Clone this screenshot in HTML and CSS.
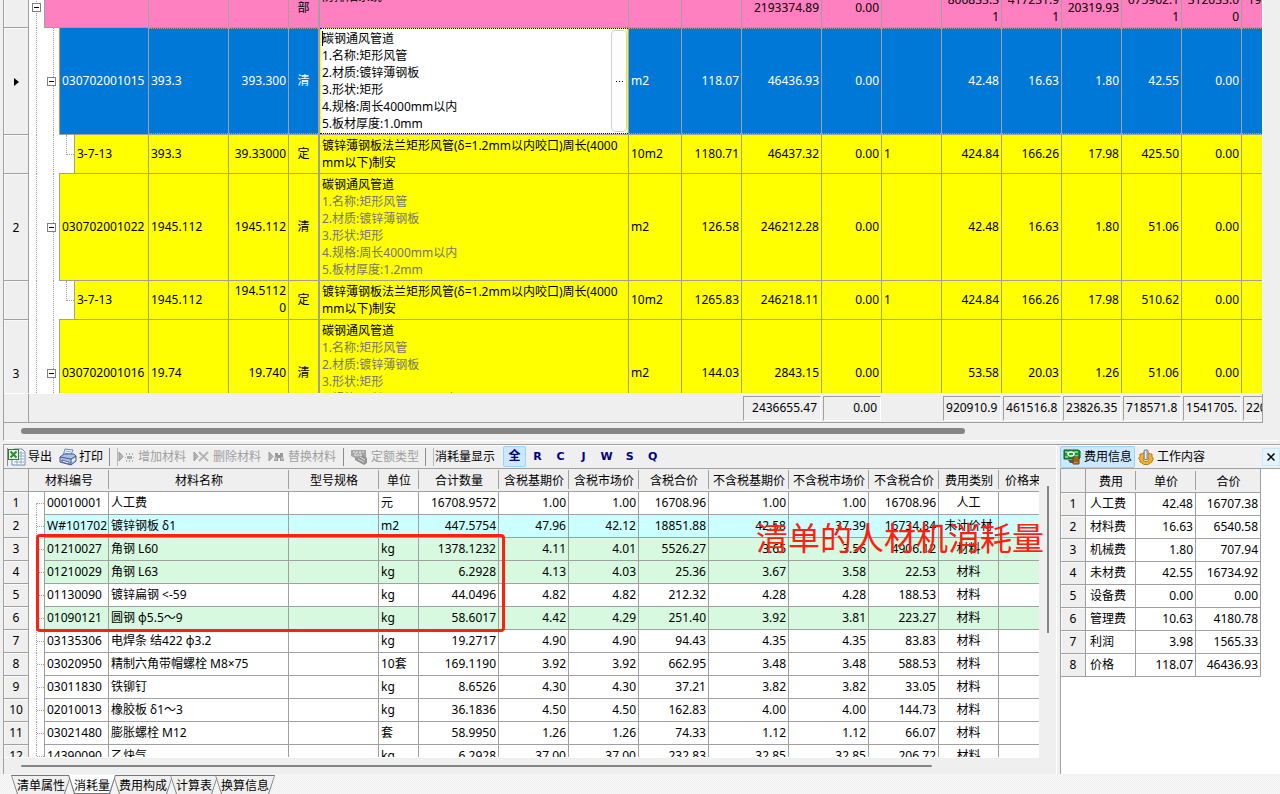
FILE: index.html
```
<!DOCTYPE html>
<html lang="zh-CN">
<head>
<meta charset="utf-8">
<title>清单计价</title>
<link rel="stylesheet" href="styles.css">
</head>
<body>
<main class="app">
<section class="bill">
<div class="bill-body">
<table class="grid bill-grid">
<colgroup><col class="w25"><col class="w120"><col class="w80"><col class="w60"><col class="w31"><col class="w309"><col class="w53"><col class="w60"><col class="w80"><col class="w60"><col class="w60"><col class="w60"><col class="w60"><col class="w60"><col class="w60"><col class="w60"><col class="w60"></colgroup>
<tbody>
<tr class="row-part">
<th class="gut"></th><td class="tree lv1"><button class="tog" aria-label="折叠"></button></td><td></td><td></td><td class="c kind">部</td><td class="desc">防排烟系统</td><td></td><td></td><td class="r">2193374.89</td><td class="r">0.00</td><td></td><td class="r">800833.3<br>1</td><td class="r">417231.9<br>1</td><td class="r">20319.93</td><td class="r">675962.1<br>1</td><td class="r">312033.0<br>0</td><td class="r">198405.7<br>1</td>
</tr>
<tr class="row-item selected">
<th class="gut"><span class="pointer"></span></th><td class="tree lv2"><button class="tog" aria-label="折叠"></button><span class="val">030702001015</span></td><td>393.3</td><td class="r">393.300</td><td class="c kind">清</td>
<td class="editing"><div class="editor"><textarea aria-label="项目名称及特征" spellcheck="false">碳钢通风管道
1.名称:矩形风管
2.材质:镀锌薄钢板
3.形状:矩形
4.规格:周长4000mm以内
5.板材厚度:1.0mm</textarea><button class="more" aria-label="更多"><i></i><i></i><i></i></button><span class="caret"></span></div></td>
<td>m2</td><td class="r">118.07</td><td class="r">46436.93</td><td class="r">0.00</td><td></td><td class="r">42.48</td><td class="r">16.63</td><td class="r">1.80</td><td class="r">42.55</td><td class="r">0.00</td><td></td>
</tr>
<tr class="row-sub">
<th class="gut"></th><td class="tree lv3"><span class="val">3-7-13</span></td><td>393.3</td><td class="r">39.33000</td><td class="c kind">定</td><td class="desc">镀锌薄钢板法兰矩形风管(δ=1.2mm以内咬口)周长(4000<br>mm以下)制安</td><td>10m2</td><td class="r">1180.71</td><td class="r">46437.32</td><td class="r">0.00</td><td>1</td><td class="r">424.84</td><td class="r">166.26</td><td class="r">17.98</td><td class="r">425.50</td><td class="r">0.00</td><td></td>
</tr>
<tr class="row-item">
<th class="gut">2</th><td class="tree lv2"><button class="tog" aria-label="折叠"></button><span class="val">030702001022</span></td><td>1945.112</td><td class="r">1945.112</td><td class="c kind">清</td><td class="desc">碳钢通风管道<br><span class="dim">1.名称:矩形风管<br>2.材质:镀锌薄钢板<br>3.形状:矩形<br>4.规格:周长4000mm以内<br>5.板材厚度:1.2mm</span></td><td>m2</td><td class="r">126.58</td><td class="r">246212.28</td><td class="r">0.00</td><td></td><td class="r">42.48</td><td class="r">16.63</td><td class="r">1.80</td><td class="r">51.06</td><td class="r">0.00</td><td></td>
</tr>
<tr class="row-sub">
<th class="gut"></th><td class="tree lv3"><span class="val">3-7-13</span></td><td>1945.112</td><td class="r">194.5112<br>0</td><td class="c kind">定</td><td class="desc">镀锌薄钢板法兰矩形风管(δ=1.2mm以内咬口)周长(4000<br>mm以下)制安</td><td>10m2</td><td class="r">1265.83</td><td class="r">246218.11</td><td class="r">0.00</td><td>1</td><td class="r">424.84</td><td class="r">166.26</td><td class="r">17.98</td><td class="r">510.62</td><td class="r">0.00</td><td></td>
</tr>
<tr class="row-item">
<th class="gut">3</th><td class="tree lv2"><button class="tog" aria-label="折叠"></button><span class="val">030702001016</span></td><td>19.74</td><td class="r">19.740</td><td class="c kind">清</td><td class="desc">碳钢通风管道<br><span class="dim">1.名称:矩形风管<br>2.材质:镀锌薄钢板<br>3.形状:矩形<br>4.规格:周长2000mm以内<br>5.板材厚度:0.75mm</span></td><td>m2</td><td class="r">144.03</td><td class="r">2843.15</td><td class="r">0.00</td><td></td><td class="r">53.58</td><td class="r">20.03</td><td class="r">1.26</td><td class="r">51.06</td><td class="r">0.00</td><td></td>
</tr>
</tbody>
</table>
</div>
<div class="bill-foot">
<table class="sums">
<colgroup><col class="w25"><col class="w120"><col class="w80"><col class="w60"><col class="w31"><col class="w309"><col class="w53"><col class="w60"><col class="w80"><col class="w60"><col class="w60"><col class="w60"><col class="w60"><col class="w60"><col class="w60"><col class="w60"><col class="w60"></colgroup>
<tbody><tr><td class="edge"></td><td colspan="7"></td><td><div class="sum">2436655.47</div></td><td><div class="sum">0.00</div></td><td></td><td><div class="sum cut">920910.9</div></td><td><div class="sum cut">461516.8</div></td><td><div class="sum cut">23826.35</div></td><td><div class="sum cut">718571.8</div></td><td><div class="sum cut">1541705.</div></td><td><div class="sum cut">220114.5</div></td></tr></tbody>
</table>
</div>
<div class="hscroll"><div class="thumb"></div></div>
</section>

<div class="lower">
<section class="materials">
<div class="toolbar">
<span class="grip"></span>
<button class="tb export"><svg width="18" height="18" viewBox="0 0 18 18"><path d="M6 1h8l3 3v13H4v-5" fill="#fff" stroke="#6f8db3"/><path d="M11 5h5M11 8h5M7 11h9M6 14h10M13 3v13M9 11v6" stroke="#8fa9c6"/><rect x="0.500" y="1.500" width="10" height="10" fill="#e6f3e4" stroke="#2c7a35"/><path d="M2.500 3.500l6 6M8.500 3.500l-6 6" stroke="#2c8a38" stroke-width="2"/></svg>导出</button>
<button class="tb print"><svg width="18" height="18" viewBox="0 0 18 18"><path d="M6 1l8 1-3 7-7-1z" fill="#f8fbff" stroke="#6b83b5"/><path d="M7 3l5 1M6 5l5 1" stroke="#7f9fd0"/><path d="M1 9l4-3 10 0 2 2v5l-5 4-11-3z" fill="#aebfe3" stroke="#3f5b96"/><path d="M1 9l11 2 5-3M12 11v6" fill="none" stroke="#3f5b96"/><path d="M3 12l7 2v2l-7-2z" fill="#fff" stroke="#4b68a5"/><path d="M13 13l3-2" stroke="#f3f7ff" stroke-width="2"/></svg>打印</button>
<span class="sep"></span><span class="grip"></span>
<button class="tb off" disabled><svg width="16" height="14" viewBox="0 0 16 14"><path d="M1 2v9l4-4.500z" fill="#b5b5b5" stroke="#999"/><path d="M8 3h1v2h-1zM11 3h1v2h-1zM14 3h1v2h-1zM9 6h5v3h-5zM7 7h1v1h-1zM15 7h1v1h-1zM8 10h1v2h-1zM11 10h1v2h-1zM14 10h1v2h-1z" fill="#aaa"/></svg>增加材料</button>
<button class="tb off" disabled><svg width="16" height="14" viewBox="0 0 16 14"><path d="M1 2v9l4-4.500z" fill="#b5b5b5" stroke="#999"/><path d="M6 2l9 9M15 2l-9 9" stroke="#b5b5b5" stroke-width="2"/></svg>删除材料</button>
<button class="tb off" disabled><svg width="16" height="14" viewBox="0 0 16 14"><path d="M1 2v9l4-4.500z" fill="#b5b5b5" stroke="#999"/><path d="M7 3h3v2h2v-2h3v3l1 5h-4v-3h-2v3h-4l1-5z" fill="#999"/><path d="M8 7v3M14 7v3" stroke="#ddd"/></svg>替换材料</button>
<span class="sep"></span>
<button class="tb off quota" disabled><svg width="18" height="16" viewBox="0 0 18 16"><path d="M0 1h15v8h-11l-4-2z" fill="#a5a5a5"/><path d="M2 3h11M3 6h9M5 3v4M9 3v4" stroke="#e8e8e8" stroke-dasharray="2 1"/><path d="M4 9h4l4-3 4 3v5l-3 2-9-5z" fill="#949494"/><path d="M7 10l6 3M9 8l5 3" stroke="#ddd"/></svg>定额类型</button>
<span class="sep"></span><span class="grip"></span>
<span class="label">消耗量显示</span>
<button class="flt on">全</button><button class="flt">R</button><button class="flt">C</button><button class="flt">J</button><button class="flt">W</button><button class="flt">S</button><button class="flt">Q</button>
</div>
<div class="mat-area">
<div class="mat-view">
<table class="grid mat-grid">
<colgroup><col class="w25"><col class="w80"><col class="w180"><col class="w90"><col class="w40"><col class="w80"><col class="w70"><col class="w70"><col class="w70"><col class="w80"><col class="w80"><col class="w70"><col class="w60"><col class="w60"></colgroup>
<thead><tr><th></th><th>材料编号</th><th>材料名称</th><th>型号规格</th><th>单位</th><th>合计数量</th><th>含税基期价</th><th>含税市场价</th><th>含税合价</th><th>不含税基期价</th><th>不含税市场价</th><th>不含税合价</th><th>费用类别</th><th>价格来源</th></tr></thead>
<tbody>
<tr><th class="gut">1</th><td class="tree">00010001</td><td>人工费</td><td></td><td>元</td><td class="r">16708.9572</td><td class="r">1.00</td><td class="r">1.00</td><td class="r">16708.96</td><td class="r">1.00</td><td class="r">1.00</td><td class="r">16708.96</td><td class="c">人工</td><td></td></tr>
<tr class="cyan"><th class="gut">2</th><td class="tree">W#101702</td><td>镀锌钢板 δ1</td><td></td><td>m2</td><td class="r">447.5754</td><td class="r">47.96</td><td class="r">42.12</td><td class="r">18851.88</td><td class="r">42.58</td><td class="r">37.39</td><td class="r">16734.84</td><td class="c">未计价材</td><td></td></tr>
<tr class="green"><th class="gut">3</th><td class="tree">01210027</td><td>角钢 L60</td><td></td><td>kg</td><td class="r">1378.1232</td><td class="r">4.11</td><td class="r">4.01</td><td class="r">5526.27</td><td class="r">3.65</td><td class="r">3.56</td><td class="r">4906.12</td><td class="c">材料</td><td></td></tr>
<tr class="green"><th class="gut">4</th><td class="tree">01210029</td><td>角钢 L63</td><td></td><td>kg</td><td class="r">6.2928</td><td class="r">4.13</td><td class="r">4.03</td><td class="r">25.36</td><td class="r">3.67</td><td class="r">3.58</td><td class="r">22.53</td><td class="c">材料</td><td></td></tr>
<tr><th class="gut">5</th><td class="tree">01130090</td><td>镀锌扁钢 &lt;-59</td><td></td><td>kg</td><td class="r">44.0496</td><td class="r">4.82</td><td class="r">4.82</td><td class="r">212.32</td><td class="r">4.28</td><td class="r">4.28</td><td class="r">188.53</td><td class="c">材料</td><td></td></tr>
<tr class="green"><th class="gut">6</th><td class="tree">01090121</td><td>圆钢 φ5.5～9</td><td></td><td>kg</td><td class="r">58.6017</td><td class="r">4.42</td><td class="r">4.29</td><td class="r">251.40</td><td class="r">3.92</td><td class="r">3.81</td><td class="r">223.27</td><td class="c">材料</td><td></td></tr>
<tr><th class="gut">7</th><td class="tree">03135306</td><td>电焊条 结422 φ3.2</td><td></td><td>kg</td><td class="r">19.2717</td><td class="r">4.90</td><td class="r">4.90</td><td class="r">94.43</td><td class="r">4.35</td><td class="r">4.35</td><td class="r">83.83</td><td class="c">材料</td><td></td></tr>
<tr><th class="gut">8</th><td class="tree">03020950</td><td>精制六角带帽螺栓 M8×75</td><td></td><td>10套</td><td class="r">169.1190</td><td class="r">3.92</td><td class="r">3.92</td><td class="r">662.95</td><td class="r">3.48</td><td class="r">3.48</td><td class="r">588.53</td><td class="c">材料</td><td></td></tr>
<tr><th class="gut">9</th><td class="tree">03011830</td><td>铁铆钉</td><td></td><td>kg</td><td class="r">8.6526</td><td class="r">4.30</td><td class="r">4.30</td><td class="r">37.21</td><td class="r">3.82</td><td class="r">3.82</td><td class="r">33.05</td><td class="c">材料</td><td></td></tr>
<tr><th class="gut">10</th><td class="tree">02010013</td><td>橡胶板 δ1～3</td><td></td><td>kg</td><td class="r">36.1836</td><td class="r">4.50</td><td class="r">4.50</td><td class="r">162.83</td><td class="r">4.00</td><td class="r">4.00</td><td class="r">144.73</td><td class="c">材料</td><td></td></tr>
<tr><th class="gut">11</th><td class="tree">03021480</td><td>膨胀螺栓 M12</td><td></td><td>套</td><td class="r">58.9950</td><td class="r">1.26</td><td class="r">1.26</td><td class="r">74.33</td><td class="r">1.12</td><td class="r">1.12</td><td class="r">66.07</td><td class="c">材料</td><td></td></tr>
<tr><th class="gut">12</th><td class="tree">14390090</td><td>乙炔气</td><td></td><td>kg</td><td class="r">6.2928</td><td class="r">37.00</td><td class="r">37.00</td><td class="r">232.83</td><td class="r">32.85</td><td class="r">32.85</td><td class="r">206.72</td><td class="c">材料</td><td></td></tr>
</tbody>
</table>
</div>
<div class="vscroll"><div class="thumb"></div></div>
</div>
<div class="hscroll thin"><div class="thumb"></div></div>
<div class="mark"></div>
<div class="note">清单的人材机消耗量</div>
</section>

<section class="cost">
<div class="cost-tabs">
<button class="ct on"><svg width="18" height="16" viewBox="0 0 18 16"><path d="M1 1h14l2 1v7l-1 1H1z" fill="#159a32" stroke="#0b5c1e"/><path d="M2 3h3M11 3h4M2 8h3M12 7h3" stroke="#d8ffd8"/><ellipse cx="8" cy="5" rx="3" ry="2" fill="#159a32" stroke="#fff" stroke-width="1.500"/><path d="M5 11h5v3h-3z" fill="#555"/><path d="M10 8h6v7h-6z" fill="#c98b2d" stroke="#6e3e11"/><path d="M10 10h6M10 12h6" stroke="#6e3e11"/></svg>费用信息</button>
<button class="ct"><svg width="16" height="16" viewBox="0 0 16 16"><path d="M2 5l2 0 1-1h6l1 1h2l0 3 1.500 2-1.500 2v1l-2 1-2 1.500h-4l-2-1.500-2-1v-2l-1.500-1.500 1.500-2z" fill="#f0b428" stroke="#b97d10"/><ellipse cx="8" cy="10.500" rx="3" ry="2" fill="#fff2b0" stroke="#b97d10"/><path d="M6 1.500q2-1.500 4 0v8.500q-2 1.500-4 0z" fill="#b9bdc6" stroke="#7c808c"/><path d="M7.500 2v8" stroke="#f0f2f6"/></svg>工作内容</button>
<button class="close" aria-label="关闭"><svg width="8" height="8" viewBox="0 0 8 8"><path d="M0.500 0.500l7 7M7.500 0.500l-7 7" stroke="#000" stroke-width="1.500"/></svg></button>
</div>
<div class="cost-view">
<table class="grid cost-grid">
<colgroup><col class="w25"><col class="w50"><col class="w60"><col class="w65"></colgroup>
<thead><tr><th></th><th>费用</th><th>单价</th><th>合价</th></tr></thead>
<tbody>
<tr><th class="gut">1</th><td>人工费</td><td class="r">42.48</td><td class="r">16707.38</td></tr>
<tr><th class="gut">2</th><td>材料费</td><td class="r">16.63</td><td class="r">6540.58</td></tr>
<tr><th class="gut">3</th><td>机械费</td><td class="r">1.80</td><td class="r">707.94</td></tr>
<tr><th class="gut">4</th><td>未材费</td><td class="r">42.55</td><td class="r">16734.92</td></tr>
<tr><th class="gut">5</th><td>设备费</td><td class="r">0.00</td><td class="r">0.00</td></tr>
<tr><th class="gut">6</th><td>管理费</td><td class="r">10.63</td><td class="r">4180.78</td></tr>
<tr><th class="gut">7</th><td>利润</td><td class="r">3.98</td><td class="r">1565.33</td></tr>
<tr><th class="gut">8</th><td>价格</td><td class="r">118.07</td><td class="r">46436.93</td></tr>
</tbody>
</table>
</div>
</section>
</div>

<nav class="tabs">
<button class="tab">清单属性</button><button class="tab on">消耗量</button><button class="tab">费用构成</button><button class="tab">计算表</button><button class="tab">换算信息</button>
</nav>
</main>
</body>
</html>
```

FILE: styles.css
```
* { box-sizing: border-box; }
:root { --line: #a0a0a0; --face: #f0f0f0; }
body {
  margin: 0;
  background: var(--face);
  color: #000;
  font: 12px/17px "Noto Sans", "Noto Sans CJK SC", sans-serif;
}
button, textarea { font: inherit; color: inherit; margin: 0; padding: 0; border: 0; background: none; border-radius: 0; }

.app { height: 100vh; display: grid; grid-template-columns: minmax(0, 1fr); grid-template-rows: minmax(0, 4fr) 3px minmax(0, 3fr) 20px; overflow: hidden; }

/* grids */
.grid, .sums { table-layout: fixed; border-collapse: separate; border-spacing: 0; }
.grid td, .grid th { padding: 0 2px; font-weight: 400; white-space: nowrap; overflow: hidden; border-right: 1px solid var(--line); border-bottom: 1px solid var(--line); }
.grid td { text-align: left; }
.grid td.r { text-align: right; }
.grid td.c { text-align: center; }
.grid th { background: #efefef; text-align: center; }
.grid .gut { box-shadow: inset 1px 1px #fafafa; }
.w25 { width: 25px; } .w31 { width: 31px; } .w40 { width: 40px; } .w50 { width: 50px; } .w53 { width: 53px; }
.w60 { width: 60px; } .w65 { width: 65px; } .w70 { width: 70px; } .w80 { width: 80px; } .w90 { width: 90px; }
.w120 { width: 120px; } .w180 { width: 180px; } .w309 { width: 309px; }

/* bill of quantities */
.bill { margin-left: 3px; margin-right: 1px; border-left: 1px solid var(--line); border-bottom: 1px solid #fff; display: flex; flex-direction: column; min-height: 0; background: #efefef; }
.bill-body, .bill-foot { margin-right: 16px; border-right: 1px solid #fff; overflow: hidden; }
.bill-body { flex: 1; min-height: 0; border-bottom: 1px solid #fff; }
.bill-grid { width: 1298px; margin-top: -12px; }
.row-part { height: 40px; background: #ff80c0; }
.row-item { height: 107px; background: #ff0; }
.row-sub { height: 39px; background: #ff0; }
.row-item td, .row-sub td { padding-bottom: 2px; }
.bill-grid .kind { border-right-width: 2px; padding-left: 0; padding-right: 0; }
.bill-grid .desc, .bill-grid .editing { vertical-align: top; }
.bill-grid .row-item .desc, .bill-grid .row-sub .desc { padding: 2px 2px 0; }
.dim { color: #757575; }

.bill-grid .tree { position: relative; border-bottom: 0; }
.lv1 { --in: 15px; --spine: 7px; }
.lv2 { --in: 30px; --spine: 22px; }
.lv3 { --in: 45px; --spine: 37px; }
.bill-grid .tree { padding-left: calc(var(--in) + 3px); background: linear-gradient(to right, #fff var(--in), var(--line) var(--in), var(--line) calc(var(--in) + 1px), transparent calc(var(--in) + 1px)); }
.tree::before { content: ""; position: absolute; inset: 0 auto 0 7px; width: 16px; border-left: 1px dotted var(--line); border-right: 1px dotted var(--line); }
.lv1::before { border-right: 0; }
.tree::after { content: ""; position: absolute; right: 0; bottom: 0; left: 30px; height: 1px; background: var(--line); }
.lv1::after { left: 15px; }
.lv3 .val::before { content: ""; position: absolute; left: 37px; top: 0; bottom: 50%; width: 7px; border-left: 1px dotted var(--line); border-bottom: 1px dotted var(--line); }
.tog { position: absolute; left: calc(var(--spine) - 4px); top: calc(50% - 5px); width: 9px; height: 9px; border: 1px solid #808080; background: linear-gradient(#000, #000) center / 5px 1px no-repeat #fff; z-index: 1; }
.pointer { display: inline-block; border: 4px solid transparent; border-left: 5px solid #000; border-right: 0; vertical-align: middle; }

.selected td { color: #fff; background: repeating-linear-gradient(to right, #f08a38 0 1px, #0078d7 1px 2px) top / 100% 1px no-repeat, repeating-linear-gradient(to right, #f08a38 0 1px, #0078d7 1px 2px) bottom / 100% 1px no-repeat, #0078d7; }
.bill-grid .selected .tree { background: linear-gradient(to right, #fff 30px, #f08a38 30px, #f08a38 31px, #0078d7 31px); }
.bill-grid .selected .editing { padding: 0; background: #ff0; color: #000; }
.editor { position: relative; height: 106px; padding: 0 1px; border: 1px dotted #000080; border-width: 1px 0; display: flex; background: linear-gradient(#fff, #fff) center / calc(100% - 2px) 100% no-repeat; }
.editor textarea { flex: 1; min-width: 0; resize: none; outline: 0; overflow: hidden; background: #fff; padding: 1px; line-height: 17px; white-space: pre; }
.more { width: 16px; background: #fdfdfd; border: 1px solid #d0d0d0; border-radius: 4px; margin: 1px 0; display: flex; align-items: center; justify-content: center; gap: 2px; }
.more i { width: 1px; height: 1px; background: #000; }
.caret { position: absolute; left: 2px; top: 2px; width: 1px; height: 15px; background: #000; }

.bill-foot { height: 29px; flex: none; border-right-color: var(--line); border-bottom: 1px solid var(--line); }
.sums { width: 1298px; height: 28px; }
.sums td { padding: 1px 1px 0; }
.sums .edge { border-right: 1px solid var(--line); }
.sum { height: 25px; padding: 2px 3px; line-height: 17px; text-align: right; overflow: hidden; white-space: nowrap; border: 1px solid #fff; border-top-color: var(--line); border-left-color: var(--line); }
.sum.cut { text-align: left; padding: 2px; }

.hscroll { height: 17px; flex: none; display: flex; align-items: center; padding-left: 17px; }
.hscroll .thumb { width: 75%; height: 6px; border-radius: 3px; background: #858585; }

/* lower panes */
.lower { grid-row: 3; display: grid; grid-template-columns: minmax(0, 1fr) 220px; grid-template-rows: minmax(0, 1fr); column-gap: 3px; margin-left: 3px; min-height: 0; border-top: 1px solid var(--line); }
.materials { position: relative; display: flex; flex-direction: column; min-width: 0; min-height: 0; border-left: 1px solid var(--line); border-right: 1px solid #fff; background: #efefef; }
.toolbar { height: 23px; flex: none; display: flex; align-items: center; white-space: nowrap; border-top: 1px solid #fff; padding-left: 3px; }
.tb { display: flex; align-items: center; gap: 2px; padding-right: 7px; }
.print { padding-right: 6px; }
.off { color: #a0a0a0; gap: 4px; }
.quota { padding-right: 6px; gap: 2px; }
.grip { width: 1px; height: 18px; background: #b8b8b8; }
.sep { width: 1px; height: 18px; background: #8c8c8c; margin-right: 7px; }
.toolbar > .grip:first-child { background: #8c8c8c; }
.label { padding: 0 8px 0 1px; }
.flt { width: 23px; height: 21px; color: #000080; font: 700 11px/17px "DejaVu Sans", "Noto Sans CJK SC", sans-serif; }
.flt.on { width: 23px; border: 1px solid #99d1ff; background: #cce8ff; border-radius: 2px; font-size: 12px; }

.mat-area { flex: 1; display: flex; min-height: 0; }
.mat-view { flex: 1; min-width: 0; overflow: hidden; border-top: 1px solid var(--line); border-bottom: 1px solid #fff; }
.mat-grid { width: 1055px; }
.mat-grid thead tr, .cost-grid thead tr { height: 23px; }
.mat-grid tbody tr, .cost-grid tbody tr { height: 23px; background: #fff; }
.grid thead th { padding: 2px 0 0; background: linear-gradient(var(--line), var(--line)) right center / 1px 19px no-repeat #efefef; border-right: 0; border-bottom: 1px solid var(--line); }
.grid thead th:first-child { background-size: 1px 100%; }
.mat-grid tbody .cyan { background: #cff; }
.mat-grid tbody .green { background: #d7f9df; }
.mat-grid .tree { position: relative; padding: 0 2px 1px 18px; border-bottom: 0; background: linear-gradient(to right, #fff 15px, var(--line) 15px, var(--line) 16px, transparent 16px); }
.mat-grid .tree::before { width: 8px; border-right: 0; background: repeating-linear-gradient(to right, var(--line) 0 1px, transparent 1px 2px) center / 100% 1px no-repeat; }
.mat-grid tr:first-child .tree::before { top: 11px; background-position: top; }
.mat-grid .tree::after { left: 15px; }
.vscroll { width: 17px; flex: none; border-top: 1px solid var(--line); padding: 17px 7px 0 8px; }
.vscroll .thumb { height: 54%; background: #858585; }
.thin { height: 16px; }
.thin .thumb { width: 88%; height: 2px; }

.mark { position: absolute; left: 32px; top: 89px; width: 469px; height: 98px; border: 3px solid #ff2010; border-radius: 4px; }
.note { position: absolute; left: 752px; top: 69px; font: 400 32px/44px "Noto Sans CJK SC", sans-serif; color: #ff2010; white-space: nowrap; }

.cost { display: flex; flex-direction: column; min-width: 0; min-height: 0; }
.cost-tabs { height: 23px; flex: none; display: flex; align-items: center; border-top: 1px solid #fff; }
.ct { display: flex; align-items: center; gap: 3px; height: 22px; padding: 0 2px; border: 1px solid transparent; border-radius: 2px; white-space: nowrap; }
.ct.on { background: #cce8ff; border-color: #99d1ff; }
.close { margin-left: auto; width: 18px; height: 18px; display: flex; align-items: center; justify-content: center; background: #e5f3ff; border: 1px solid #cce8ff; }
.cost-view { flex: 1; min-height: 0; overflow: hidden; background: #fff; border-top: 1px solid var(--line); border-left: 1px solid var(--line); }
.cost-grid { width: 200px; }
.cost-grid tbody td:nth-child(2) { padding-left: 4px; }
.cost-grid thead tr { height: 24px; }
.cost-grid thead th:last-child { background-size: 1px 100%; }

/* bottom tabs */
.tabs { grid-row: 4; display: flex; padding: 1px 11px 0; background: repeating-conic-gradient(#f8f8f8 0 25%, #f0f0f0 0 50%) 0 0 / 2px 2px; }
.tab { position: relative; isolation: isolate; height: 19px; padding: 3px 6px 0; margin-right: -3px; white-space: nowrap; line-height: 16px; }
.tab::before, .tab::after { content: ""; position: absolute; inset: 0; z-index: -1; background: #777; clip-path: polygon(0 0, 100% 0, calc(100% - 6px) 100%, 6px 100%); }
.tab::after { inset: 1px 1px 0; background: var(--face); }
.tab.on { z-index: 1; }
.tab.on::after { top: 0; bottom: 1px; background: #fff; }
```
